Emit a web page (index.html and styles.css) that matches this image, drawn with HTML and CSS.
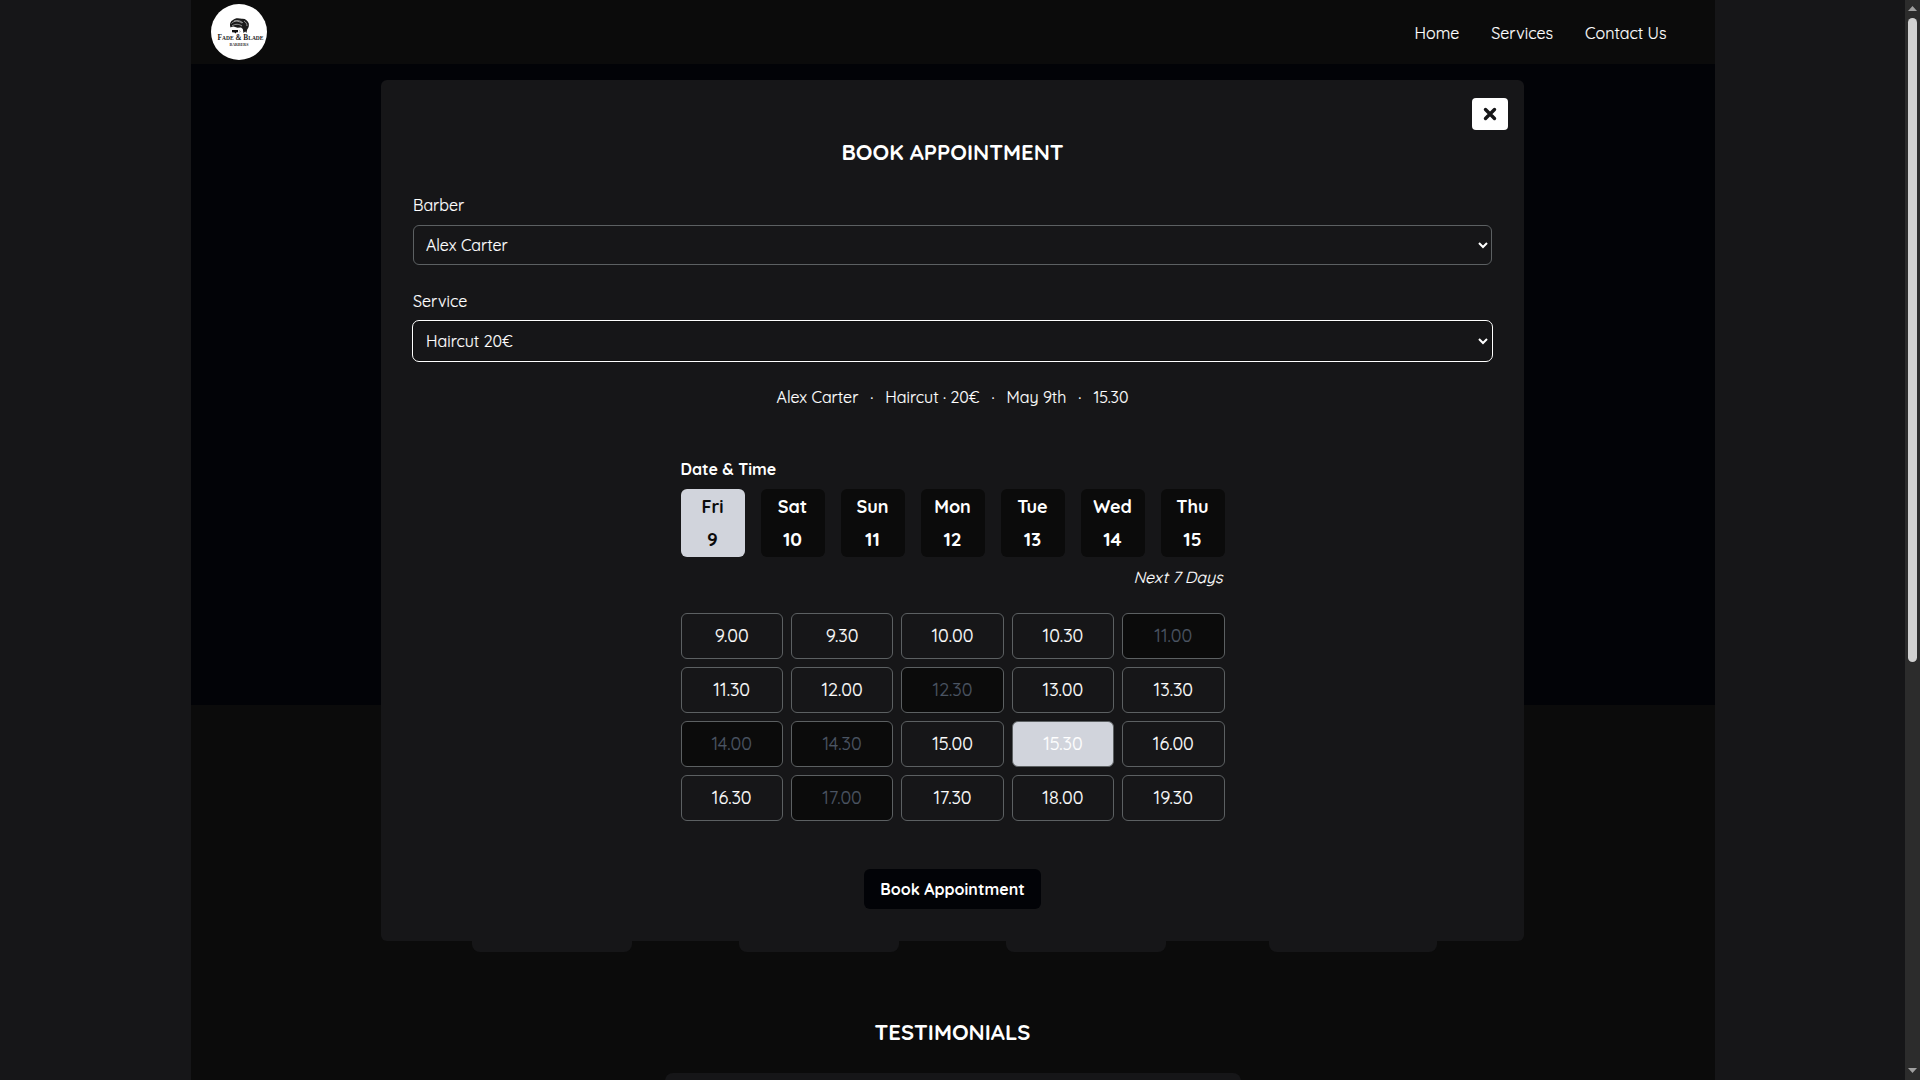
FILE: index.html
```html
<!DOCTYPE html>
<html lang="en">
<head>
<meta charset="utf-8">
<title>Fade &amp; Blade Barbers</title>
<link rel="stylesheet" href="styles.css">
</head>
<body>
<div class="page">
  <header class="header">
    <svg class="logo" viewBox="0 0 56 56" role="img" aria-label="Fade &amp; Blade Barbers">
      <circle cx="28" cy="28" r="28" fill="#fff"/>
      <path d="M19.500 23.500c-1.200-3.500 0-6.500 2.500-7.500 2-2.500 6-2 9-1.300 3-.4 6 1.800 6.800 4.800.4 2.500-.3 4.500-1.600 6l-.8 3.500-1.200-1.500-1.700 1.500-.7-4-1.800-1.500-3.500.2-4-1.200-2 .5z" fill="#1b1b1b"/>
      <path d="M20.500 19.500c3-3.500 7-2.500 10.500-.5M23 17c4-1.200 7 0 9 2M21 22c3.500-2.500 7-2 10 0M33 17c2 1.200 3 3 3 5" fill="none" stroke="#c4c4c4" stroke-width=".7"/>
      <path d="M21 26h6v2.300h-1.500l-.8 1.200-1.200-1-2.500-.2z" fill="#111"/>
      <path d="M28 26.500l1.500 1-1 1" fill="none" stroke="#777" stroke-width=".5"/>
      <text class="logo-name" x="29.500" y="36.300" text-anchor="middle" textLength="46" lengthAdjust="spacingAndGlyphs">Fade &amp; Blade</text>
      <text class="logo-sub" x="28" y="42" text-anchor="middle" textLength="19" lengthAdjust="spacingAndGlyphs">BARBERS</text>
    </svg>
    <nav class="nav">
      <a>Home</a>
      <a>Services</a>
      <a>Contact Us</a>
    </nav>
  </header>
  <section class="hero"></section>
  <section class="services">
    <div class="service-card"></div>
    <div class="service-card"></div>
    <div class="service-card"></div>
    <div class="service-card service-card-wide"></div>
  </section>
  <section class="testimonials">
    <h2 class="section-title">TESTIMONIALS</h2>
    <div class="testimonial-card"></div>
  </section>
</div>

<div class="modal">
  <button class="close" aria-label="Close">
    <svg width="14" height="14" viewBox="0 0 14 14"><path d="M2.500 2.500l9 9M11.500 2.500l-9 9" stroke="#161618" stroke-width="3.400" stroke-linecap="round"/></svg>
  </button>
  <h2 class="modal-title">BOOK APPOINTMENT</h2>
  <div class="field">
    <span class="label">Barber</span>
    <div class="select"><span>Alex Carter</span>
      <svg width="10" height="7" viewBox="0 0 10 7"><path d="M1 1l4 4 4-4" fill="none" stroke="#fff" stroke-width="2"/></svg>
    </div>
  </div>
  <div class="field">
    <span class="label">Service</span>
    <div class="select focused"><span>Haircut 20€</span>
      <svg width="10" height="7" viewBox="0 0 10 7"><path d="M1 1l4 4 4-4" fill="none" stroke="#fff" stroke-width="2"/></svg>
    </div>
  </div>
  <div class="summary">
    <span>Alex Carter</span><span class="dot">·</span><span>Haircut · 20€</span><span class="dot">·</span><span>May 9th</span><span class="dot">·</span><span>15.30</span>
  </div>
  <div class="schedule">
    <h3 class="schedule-title">Date &amp; Time</h3>
    <div class="days">
      <div class="day selected"><span>Fri</span><span class="day-number">9</span></div>
      <div class="day"><span>Sat</span><span class="day-number">10</span></div>
      <div class="day"><span>Sun</span><span class="day-number">11</span></div>
      <div class="day"><span>Mon</span><span class="day-number">12</span></div>
      <div class="day"><span>Tue</span><span class="day-number">13</span></div>
      <div class="day"><span>Wed</span><span class="day-number">14</span></div>
      <div class="day"><span>Thu</span><span class="day-number">15</span></div>
    </div>
    <p class="hint">Next 7 Days</p>
    <div class="times">
      <div class="time">9.00</div><div class="time">9.30</div><div class="time">10.00</div><div class="time">10.30</div><div class="time taken">11.00</div>
      <div class="time">11.30</div><div class="time">12.00</div><div class="time taken">12.30</div><div class="time">13.00</div><div class="time">13.30</div>
      <div class="time taken">14.00</div><div class="time taken">14.30</div><div class="time">15.00</div><div class="time chosen">15.30</div><div class="time">16.00</div>
      <div class="time">16.30</div><div class="time taken">17.00</div><div class="time">17.30</div><div class="time">18.00</div><div class="time">19.30</div>
    </div>
  </div>
  <button class="book">Book Appointment</button>
</div>

<div class="scrollbar">
  <svg width="9" height="5" viewBox="0 0 9 5"><path d="M4.500 0L9 5H0z" fill="#a0a0a0"/></svg>
  <div class="thumb"></div>
  <svg class="arrow-down" width="9" height="5" viewBox="0 0 9 5"><path d="M4.500 5L9 0H0z" fill="#a0a0a0"/></svg>
</div>
</body>
</html>
```
FILE: styles.css
```css
* { box-sizing: border-box; }
body {
  margin: 0;
  height: 1080px;
  overflow: hidden;
  background: #161618;
  color: #fff;
  font: 400 16px/24px Quicksand, Lato, sans-serif;
  -webkit-text-stroke: 0.15px currentColor;
}
h2, h3, p { margin: 0; }
h2, h3 { -webkit-text-stroke: 0; }
button { font: inherit; border: 0; color: inherit; }

.page {
  width: 1524px;
  height: 1080px;
  margin-left: 190.5px;
  background: #0b0b0b;
  overflow: hidden;
}
.header {
  height: 64px;
  padding: 0 48px 0 20px;
  display: flex;
  align-items: center;
  justify-content: space-between;
}
.logo { width: 56px; height: 56px; overflow: visible; -webkit-text-stroke: 0; }
.logo-name { font: bold 8px "Liberation Serif", serif; font-variant: small-caps; fill: #222; }
.logo-sub { font: bold 4.500px "Liberation Serif", serif; fill: #333; }
.nav { display: flex; gap: 32px; padding-top: 1px; }
.hero { height: 641px; background: #020307; }
.services {
  height: 247px;
  padding: 0 86px 0 281px;
  display: flex;
  gap: 107px;
}
.service-card {
  width: 160px;
  flex: none;
  background: #161618;
  border-radius: 8px;
}
.service-card-wide { width: 168px; margin-left: -4px; }
.section-title, .modal-title {
  font-size: 22px;
  line-height: 32px;
  font-weight: 700;
  text-align: center;
}
.testimonials { padding-top: 64px; }
.testimonial-card {
  width: 576px;
  height: 100px;
  margin: 25px auto 0;
  background: #161618;
  border-radius: 8px;
}

.modal {
  position: absolute;
  left: 381px;
  top: 80px;
  width: 1143px;
  height: 861px;
  padding: 56px 32px 0;
  background: #161618;
  border-radius: 6px;
  display: flex;
  flex-direction: column;
}
.close {
  position: absolute;
  right: 16px;
  top: 18px;
  width: 36px;
  height: 32px;
  padding: 0;
  background: #fff;
  border-radius: 4px;
  display: flex;
  align-items: center;
  justify-content: center;
}
.modal-title { margin-bottom: 25px; }
.field { display: flex; flex-direction: column; margin-bottom: 24px; }
.label { height: 32px; }
.select {
  height: 40px;
  padding: 0 3px 0 12px;
  border: 1px solid #5c6062;
  border-radius: 6px;
  display: flex;
  align-items: center;
  justify-content: space-between;
}
.focused { border-color: #101010; outline: 1px solid #fff; }
.summary {
  display: flex;
  justify-content: center;
  gap: 11.500px;
  white-space: nowrap;
}
.dot { width: 4px; text-align: center; }
.schedule { width: 544px; margin: 48px auto 0; }
.schedule-title { font-size: 16px; line-height: 24px; font-weight: 700; }
.days { display: flex; gap: 16px; margin-top: 8px; }
.day {
  width: 64px;
  height: 68px;
  padding-top: 2px;
  background: #0b0b0b;
  border-radius: 6px;
  display: flex;
  flex-direction: column;
  align-items: center;
  font-size: 18px;
  line-height: 32px;
  font-weight: 700;
  -webkit-text-stroke: 0;
}
.day-number { font-size: 19px; }
.selected { background: #d1d4dc; color: #0b0b0b; }
.hint { margin-top: 8px; padding-right: 2px; text-align: right; font-style: italic; }
.times {
  display: grid;
  grid-template-columns: repeat(5, 1fr);
  gap: 8px;
  margin-top: 24px;
}
.time {
  height: 46px;
  border: 1px solid #5c6062;
  border-radius: 6px;
  display: flex;
  align-items: center;
  justify-content: center;
  font-size: 18px;
}
.taken { background: #0b0b0b; color: #4b5563; }
.chosen { background: #d1d4dc; }
.book {
  width: 177px;
  height: 40px;
  margin: 48px auto 0;
  padding: 0;
  background: #020307;
  border-radius: 6px;
  font-weight: 700;
  -webkit-text-stroke: 0;
}

.scrollbar {
  position: absolute;
  right: 0;
  top: 0;
  width: 15px;
  height: 1080px;
  padding: 6px 3px 7px;
  background: #2c2c2c;
  display: flex;
  flex-direction: column;
}
.scrollbar svg { flex: none; }
.thumb { height: 644px; margin-top: 7px; background: #d1d1d1; border-radius: 5px; }
.arrow-down { margin-top: auto; }
```
